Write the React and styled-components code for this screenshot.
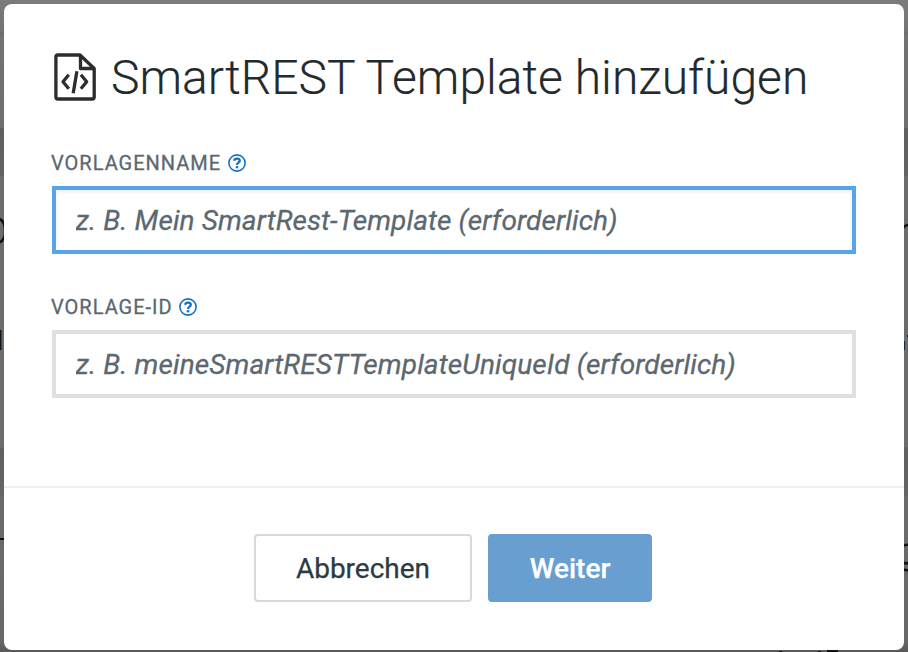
import React from "react";
import styled, { createGlobalStyle } from "styled-components";

const Global = createGlobalStyle`
  * { box-sizing: border-box; }
  body { margin: 0; font-family: Roboto, sans-serif; overflow: hidden; }
`;
const Backdrop = styled.div`
  position: relative;
  height: 652px;
  padding: 4px 4px 2px;
  background: linear-gradient(
    #7b7b7b 0, #747474 32px, #6b6b6b 32px, #727272 35px, #6f6f6f 128px,
    #5f5f5f 128px, #636363 176px, #6c6c6c 176px, #6c6c6c 447px,
    #606060 448px, #656565 496px, #6b6b6b 496px, #686868 640px, #595959 652px
  );
`;
/* Dimmed page content that peeks out around the dialog */
const PagePeek = styled.svg`
  position: absolute;
  inset: 0;
  width: 908px;
  height: 652px;
`;
const Dialog = styled.section`
  position: relative;
  height: 646px;
  border-radius: 8px;
  background: #fff;
  display: flex;
  flex-direction: column;
`;
const Header = styled.header`
  display: flex;
  align-items: center;
  height: 142px;
  padding: 4px 48px 0;
`;
const FileIcon = styled.svg`
  width: 46px;
  height: 52px;
  flex: none;
`;
const Title = styled.h1`
  margin: 2px 0 0 13px;
  font-size: 48px;
  font-weight: 300;
  line-height: 60px;
  letter-spacing: 0.03px;
  color: #222a2d;
  -webkit-text-stroke: 0.15px #222a2d;
  white-space: nowrap;
`;
const Form = styled.form`
  flex: 1;
  padding: 0 48px;
`;
const Field = styled.div`
  height: 144px;
`;
const Label = styled.label`
  display: flex;
  align-items: center;
  height: 34px;
  gap: 6.5px;
  margin-left: -1px;
  font-size: 20px;
  letter-spacing: 1px;
  color: #5b6870;
  -webkit-text-stroke: 0.3px #5b6870;
`;
const HelpIcon = styled.svg`
  width: 18px;
  height: 18px;
`;
const Input = styled.input`
  display: block;
  width: 804px;
  height: 68px;
  margin-top: 6px;
  padding: 0 19.5px;
  border: 4px solid ${(p) => (p.$active ? "#57a5e8" : "#e0e0e0")};
  border-radius: 0;
  background: #fff;
  box-shadow: ${(p) => (p.$active ? "inset 0 2px 4px rgba(0, 0, 0, 0.08)" : "none")};
  font: 400 28px Roboto, sans-serif;
  letter-spacing: 0.1px;
  outline: none;
  &::placeholder {
    color: #5b6870;
    font-style: italic;
    opacity: 1;
    -webkit-text-stroke: 0.3px #5b6870;
  }
`;
const Footer = styled.footer`
  display: flex;
  justify-content: center;
  gap: 16px;
  height: 164px;
  padding: 46px 2px 0 0;
  border-top: 2px solid #f0f0f0;
`;
const Button = styled.button`
  width: ${(p) => (p.$primary ? 164 : 218)}px;
  height: 68px;
  padding: 0;
  border: 2px solid ${(p) => (p.$primary ? "#699ed1" : "#d5dada")};
  border-radius: 4px;
  background: ${(p) => (p.$primary ? "#699ed1" : "#fff")};
  color: ${(p) => (p.$primary ? "#fff" : "#2c3b41")};
  font: ${(p) => (p.$primary ? 500 : 400)} 28px Roboto, sans-serif;
  -webkit-text-stroke: 0.25px currentColor;
`;

const Help = () => (
  <HelpIcon viewBox="0 0 18 18" fill="none" stroke="#1870c0">
    <circle cx="9" cy="9" r="8.1" strokeWidth="1.6" />
    <path d="M6.1 6.8C6.4 5.2 7.7 4.6 9.1 4.6c1.6 0 2.7.9 2.7 2.2C11.8 8.6 9 8.6 9 10.9" strokeWidth="2.3" />
    <path d="M9 12.1v2.2" strokeWidth="2.5" />
  </HelpIcon>
);

export default function App() {
  return (
    <Backdrop>
      <Global />
      <PagePeek viewBox="0 0 908 652" fill="none" stroke="#111" strokeWidth="2.5" aria-hidden="true">
        <path d="M-2 218.5Q5 220 5 231T-2 242.5" />
        <path d="M0 330h1.5v20H0z" fill="#101820" stroke="none" />
        <path d="M0 539h4" strokeWidth="2" />
        <path d="M903 228q2-3 6-3M903 546q3-2 6-1M903 562q3 3 6 0M903 569q3 2 6 1" />
        <path d="M904 341v9" stroke="#14283f" strokeWidth="2" />
        <path d="M907 335h1v2h-1zM779 651h3v1h-3zM818 651h3v1h-3zM827 650h11v2h-11z" fill="#111" stroke="none" />
      </PagePeek>
      <Dialog>
        <Header>
          <FileIcon viewBox="0 0 46 52" fill="none" stroke="#2c2c2c" strokeWidth="3.3" strokeLinejoin="round">
            <path d="M5.9 4h22.1L42.2 17.5v28.5q0 2-2 2H5.9q-2 0-2-2V6q0-2 2-2z" />
            <path d="M28.5 4.5v13h13" />
            <path d="M16.8 23.7L11 30.7l5.8 7M28.9 23.7l5.8 7-5.8 7M24.9 20.2l-3.7 22" />
          </FileIcon>
          <Title>SmartREST Template hinzufügen</Title>
        </Header>
        <Form>
          <Field>
            <Label>VORLAGENNAME <Help /></Label>
            <Input $active placeholder="z. B. Mein SmartRest-Template (erforderlich)" />
          </Field>
          <Field>
            <Label>VORLAGE-ID <Help /></Label>
            <Input placeholder="z. B. meineSmartRESTTemplateUniqueId (erforderlich)" />
          </Field>
        </Form>
        <Footer>
          <Button>Abbrechen</Button>
          <Button $primary>Weiter</Button>
        </Footer>
      </Dialog>
    </Backdrop>
  );
}
